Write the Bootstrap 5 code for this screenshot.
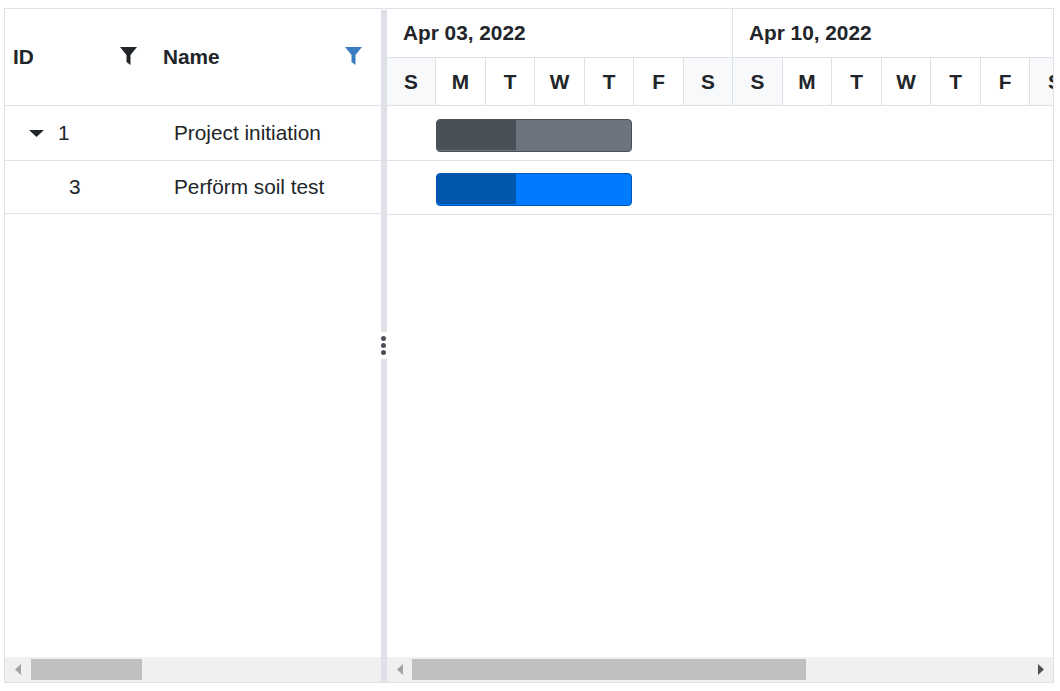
<!DOCTYPE html>
<html lang="en">
<head>
<meta charset="utf-8">
<title>Gantt</title>
<link href="https://cdn.jsdelivr.net/npm/bootstrap@5.3.0/dist/css/bootstrap.min.css" rel="stylesheet">
<style>
html, body { background: #fff; }
body { font-family: "Liberation Sans", Arial, sans-serif; font-size: 20.8px; line-height: 24px; color: #212529; overflow: hidden; }
.gantt-frame { margin: 8px 0 0 4px; width: 1050px; height: 675px; }
.pane-left { width: 376px; }
.pane-right { width: 666px; }
.pane-body { height: 648px; }
.head-left { height: 97px; }
.col-id { width: 150px; }
.col-name { width: 226px; }
.head-id { padding: 0 18px 0 8px; }
.head-name { padding: 0 19px 0 8px; }
.row-a { height: 55px; }
.row-b-left { height: 53px; }
.row-b-right { height: 54px; }
.id-tree { padding-left: 24px; gap: 14px; }
.id-leaf { padding-left: 64px; }
.name-cell { padding-left: 19px; }
.tier-top { height: 49px; }
.week-cell { flex: 0 0 346px; padding-left: 16px; }
.tier-days { height: 48px; }
.day-cell { flex: 0 0 49px; }
.day-cell:nth-child(even) { flex-basis: 50px; }
.day-off { background: #f8f9fa; }
.splitter { width: 6px; margin-top: 1px; }
.split-bar { background: #dee2e6; }
.split-top { flex: 0 0 322px; }
.split-grip { flex: 0 0 27px; gap: 2px; }
.grip-dot { width: 5px; height: 5px; border-radius: 50%; background: #495057; }
.task-bar { width: 196px; height: 33px; margin-left: 49px; border-radius: 4px; border: 1px solid; overflow: hidden; }
.bar-grey { background: #6c757d; border-color: #495057; }
.bar-grey .task-done { background: #495057; }
.bar-blue { background: #007bff; border-color: #0056b3; }
.bar-blue .task-done { background: #0056ad; }
.task-done { width: 79px; height: 30px; border-radius: 3px 0 0 3px; }
.pad-a { padding-top: 13px; }
.pad-b { padding-top: 12px; }
.sbar { height: 25px; background: #f0f0f0; }
.sbar-btn { flex: 0 0 26px; }
.sbar-btn-r { flex: 0 0 25px; }
.sbar-thumb { background: #c0c0c0; height: 21px; }
.thumb-left { width: 111px; }
.thumb-right { width: 394px; }
.sbar-end { padding-right: 9px; }
.icon-funnel { width: 17px; height: 18px; display: block; margin-top: -2px; }
</style>
</head>
<body>
<div class="gantt-frame border d-flex">
  <div class="pane-left d-flex flex-column">
    <div class="pane-body">
      <div class="head-left d-flex border-bottom fw-bold">
        <div class="col-id head-id d-flex align-items-center justify-content-between">
          <span>ID</span>
          <svg class="icon-funnel" viewBox="0 0 17 18"><polygon points="0,0 17,0 10.5,8 10.5,18 6.5,15 6.5,8" fill="#212529"/></svg>
        </div>
        <div class="col-name head-name d-flex align-items-center justify-content-between">
          <span>Name</span>
          <svg class="icon-funnel" viewBox="0 0 17 18"><polygon points="0,0 17,0 10.5,8 10.5,18 6.5,15 6.5,8" fill="#3a7cc1"/></svg>
        </div>
      </div>
      <div class="row-a d-flex align-items-center border-bottom">
        <div class="col-id id-tree d-flex align-items-center">
          <svg width="15" height="7" viewBox="0 0 15 7" class="d-block"><polygon points="0,0 15,0 7.5,7" fill="#212529"/></svg>
          <span>1</span>
        </div>
        <div class="col-name name-cell">Project initiation</div>
      </div>
      <div class="row-b-left d-flex align-items-center border-bottom">
        <div class="col-id id-leaf">3</div>
        <div class="col-name name-cell">Perförm soil test</div>
      </div>
    </div>
    <div class="sbar d-flex align-items-center">
      <div class="sbar-btn d-flex align-items-center justify-content-center">
        <svg width="6" height="11" viewBox="0 0 6 11" class="d-block"><polygon points="6,0 6,11 0,5.5" fill="#a3a3a3"/></svg>
      </div>
      <div class="sbar-thumb thumb-left"></div>
    </div>
  </div>

  <div class="splitter d-flex flex-column">
    <div class="split-bar split-top"></div>
    <div class="split-grip d-flex flex-column align-items-start justify-content-center">
      <div class="grip-dot"></div>
      <div class="grip-dot"></div>
      <div class="grip-dot"></div>
    </div>
    <div class="split-bar flex-grow-1"></div>
  </div>

  <div class="pane-right d-flex flex-column overflow-hidden">
    <div class="pane-body">
      <div class="tier-top d-flex fw-bold border-bottom">
        <div class="week-cell border-end d-flex align-items-center">Apr 03, 2022</div>
        <div class="week-cell d-flex align-items-center">Apr 10, 2022</div>
      </div>
      <div class="tier-days d-flex fw-bold border-bottom overflow-hidden">
        <div class="day-cell day-off border-end d-flex align-items-center justify-content-center">S</div>
        <div class="day-cell border-end d-flex align-items-center justify-content-center">M</div>
        <div class="day-cell border-end d-flex align-items-center justify-content-center">T</div>
        <div class="day-cell border-end d-flex align-items-center justify-content-center">W</div>
        <div class="day-cell border-end d-flex align-items-center justify-content-center">T</div>
        <div class="day-cell border-end d-flex align-items-center justify-content-center">F</div>
        <div class="day-cell day-off border-end d-flex align-items-center justify-content-center">S</div>
        <div class="day-cell day-off border-end d-flex align-items-center justify-content-center">S</div>
        <div class="day-cell border-end d-flex align-items-center justify-content-center">M</div>
        <div class="day-cell border-end d-flex align-items-center justify-content-center">T</div>
        <div class="day-cell border-end d-flex align-items-center justify-content-center">W</div>
        <div class="day-cell border-end d-flex align-items-center justify-content-center">T</div>
        <div class="day-cell border-end d-flex align-items-center justify-content-center">F</div>
        <div class="day-cell day-off d-flex align-items-center justify-content-center">S</div>
      </div>
      <div class="row-a border-bottom pad-a">
        <div class="task-bar bar-grey"><div class="task-done"></div></div>
      </div>
      <div class="row-b-right border-bottom pad-b">
        <div class="task-bar bar-blue"><div class="task-done"></div></div>
      </div>
    </div>
    <div class="sbar d-flex align-items-center">
      <div class="sbar-btn-r d-flex align-items-center justify-content-center">
        <svg width="6" height="11" viewBox="0 0 6 11" class="d-block"><polygon points="6,0 6,11 0,5.5" fill="#a3a3a3"/></svg>
      </div>
      <div class="sbar-thumb thumb-right"></div>
      <div class="ms-auto sbar-end d-flex align-items-center">
        <svg width="6" height="11" viewBox="0 0 6 11" class="d-block"><polygon points="0,0 0,11 6,5.5" fill="#505050"/></svg>
      </div>
    </div>
  </div>
</div>
<script src="https://cdn.jsdelivr.net/npm/bootstrap@5.3.0/dist/js/bootstrap.bundle.min.js"></script>
</body>
</html>
